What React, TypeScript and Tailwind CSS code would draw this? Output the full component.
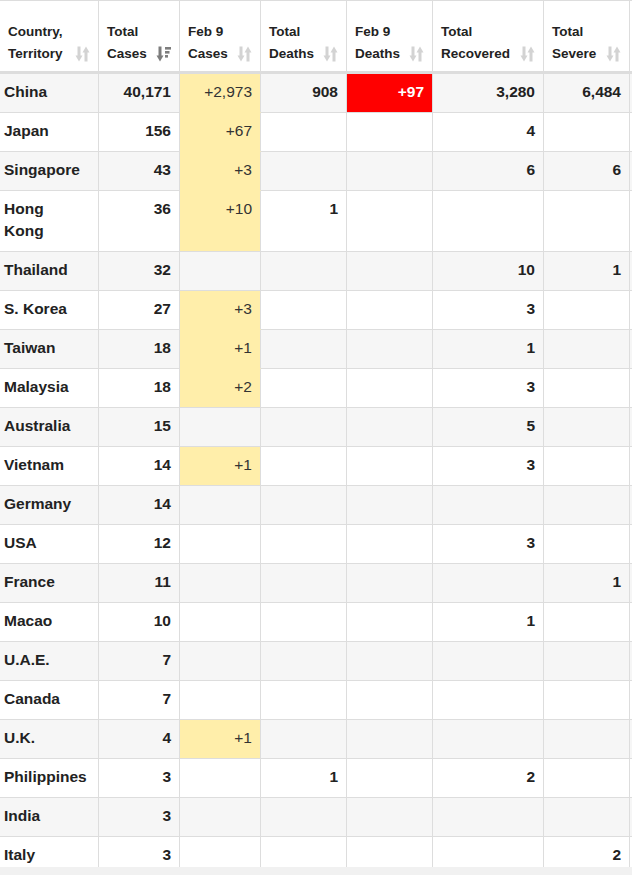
const font = { fontFamily: '"Liberation Sans", Arial, sans-serif' };

type Row = [string, string, string, string, string, string, string];

const rows: Row[] = [
  ["China", "40,171", "+2,973", "908", "+97", "3,280", "6,484"],
  ["Japan", "156", "+67", "", "", "4", ""],
  ["Singapore", "43", "+3", "", "", "6", "6"],
  ["Hong Kong", "36", "+10", "1", "", "", ""],
  ["Thailand", "32", "", "", "", "10", "1"],
  ["S. Korea", "27", "+3", "", "", "3", ""],
  ["Taiwan", "18", "+1", "", "", "1", ""],
  ["Malaysia", "18", "+2", "", "", "3", ""],
  ["Australia", "15", "", "", "", "5", ""],
  ["Vietnam", "14", "+1", "", "", "3", ""],
  ["Germany", "14", "", "", "", "", ""],
  ["USA", "12", "", "", "", "3", ""],
  ["France", "11", "", "", "", "", "1"],
  ["Macao", "10", "", "", "", "1", ""],
  ["U.A.E.", "7", "", "", "", "", ""],
  ["Canada", "7", "", "", "", "", ""],
  ["U.K.", "4", "+1", "", "", "", ""],
  ["Philippines", "3", "", "1", "", "2", ""],
  ["India", "3", "", "", "", "", ""],
  ["Italy", "3", "", "", "", "", "2"],
];

const headers = [
  ["Country,", "Territory"],
  ["Total", "Cases"],
  ["Feb 9", "Cases"],
  ["Total", "Deaths"],
  ["Feb 9", "Deaths"],
  ["Total", "Recovered"],
  ["Total", "Severe"],
];

function SortIcon({ active }: { active?: boolean }) {
  if (active) {
    const c = "#7d7d7d";
    return (
      <svg width="15" height="16" viewBox="0 0 15 16" className="shrink-0">
        <path d="M4 0.5v10" stroke={c} strokeWidth="3" />
        <path d="M0.5 9.5h7L4 15.5z" fill={c} />
        <rect x="9" y="1" width="6" height="2.6" fill={c} />
        <rect x="9" y="5" width="4.5" height="2.6" fill={c} />
        <rect x="9" y="9" width="3" height="2.6" fill={c} />
      </svg>
    );
  }
  const c = "#d3d3d3";
  return (
    <svg width="15" height="16" viewBox="0 0 15 16" className="shrink-0">
      <path d="M4 0.5v10" stroke={c} strokeWidth="3" />
      <path d="M0.5 9.5h7L4 15.5z" fill={c} />
      <path d="M11 5.5v10" stroke={c} strokeWidth="3" />
      <path d="M7.5 6.5h7L11 0.5z" fill={c} />
    </svg>
  );
}

export default function App() {
  return (
    <div className="w-[632px] h-[875px] overflow-hidden bg-white text-[#222]" style={font}>
      <div className="h-[867px] overflow-hidden">
        <div className="grid grid-cols-[99px_81px_81px_86px_86px_111px_86px_100px] w-max border-t border-[#dddddd]">
          {headers.map((h, i) => (
            <div
              key={i}
              className="h-[73px] border-r border-b-[3px] border-[#dddddd] flex items-end justify-between pl-[8px] pr-[8px] pb-[6px] text-[13.5px] leading-[22px] font-bold text-[#222]"
            >
              <div>
                {h[0]}
                <br />
                {h[1]}
              </div>
              <div className="mb-[3px]">
                <SortIcon active={i === 1} />
              </div>
            </div>
          ))}
          <div className="h-[73px] border-b-[3px] border-[#dddddd]" />

          {rows.map((r, ri) => {
            const stripe = ri % 2 === 0 ? "bg-[#f6f6f6]" : "bg-white";
            const nextNew = ri + 1 < rows.length && rows[ri + 1][2] !== "";
            return [
              <div
                key={ri + "-0"}
                className={`${stripe} border-r border-b border-[#dddddd] pl-[4px] pr-[8px] pt-[7px] pb-[9px] text-[15.5px] leading-[22px] font-bold`}
              >
                {r[0] === "Hong Kong" ? (
                  <>
                    Hong
                    <br />
                    Kong
                  </>
                ) : (
                  r[0]
                )}
              </div>,
              ...r.slice(1).map((v, ci) => {
                const col = ci + 1;
                let bg = stripe;
                let extra = "font-bold border-b-[#dddddd]";
                if (col === 2) {
                  extra = "font-normal text-[#333] border-b-[#dddddd]";
                  if (v) {
                    bg = "bg-[#ffeeaa]";
                    if (nextNew) extra = "font-normal text-[#333] border-b-[#ffeeaa]";
                  }
                }
                if (col === 4 && v) {
                  bg = "bg-[#ff0000]";
                  extra = "font-bold text-white border-b-[#dddddd]";
                }
                return (
                  <div
                    key={ri + "-" + col}
                    className={`${bg} border-r border-b border-r-[#dddddd] pl-[4px] pr-[8px] pt-[7px] pb-[9px] text-right text-[15.5px] leading-[22px] ${extra}`}
                  >
                    {v}
                  </div>
                );
              }),
              <div key={ri + "-7"} className={`${stripe} border-b border-[#dddddd]`} />,
            ];
          })}
        </div>
      </div>
      <div className="h-[8px] bg-[#f1f1f1]" />
    </div>
  );
}
